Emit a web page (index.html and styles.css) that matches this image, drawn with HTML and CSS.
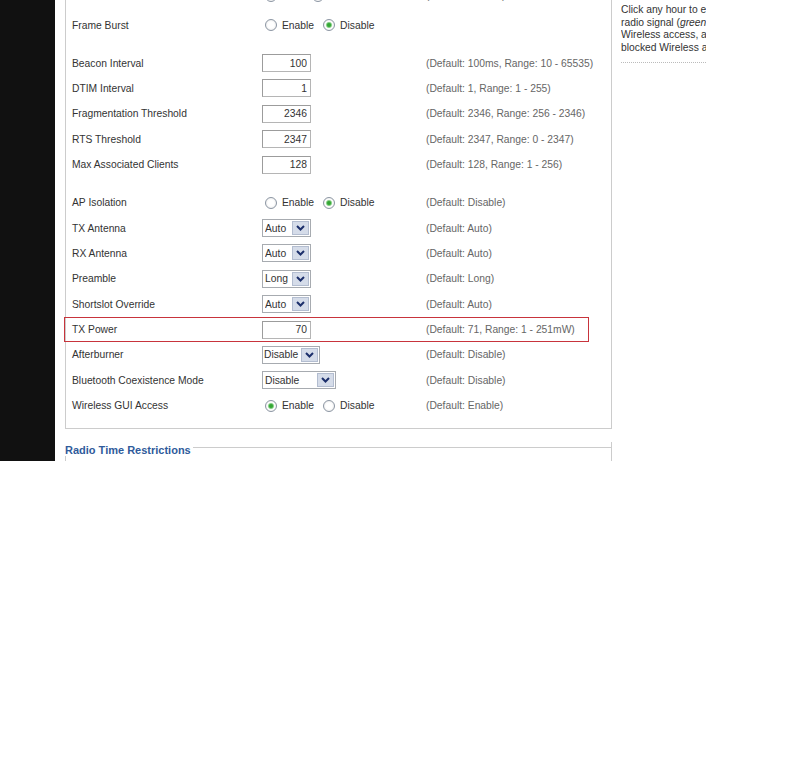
FILE: index.html
```html
<!DOCTYPE html>
<html>
	<head>
		<meta charset="UTF-8" />
		<title>Advanced Settings</title>
		<link rel="stylesheet" href="styles.css">
	</head>
	<body>
<div class="page">
  <div class="sidebar"></div>

  <div class="main">
    <div class="fieldset">
      <div class="row first">
        <div class="label">CTS Protection Mode</div>
        <div class="field">
          <input type="radio" name="cts" /><span class="opt">Auto</span>
          <input type="radio" name="cts" checked /><span class="opt">Disable</span>
        </div>
        <div class="default">(Default: Disable)</div>
      </div>
      <div class="row">
        <div class="label">Frame Burst</div>
        <div class="field">
          <input type="radio" name="burst" /><span class="opt">Enable</span>
          <input type="radio" name="burst" checked /><span class="opt">Disable</span>
        </div>
      </div>

      <div class="spacer"></div>

      <div class="row">
        <div class="label">Beacon Interval</div>
        <div class="field"><input class="num" type="text" value="100" /></div>
        <div class="default">(Default: 100ms, Range: 10 - 65535)</div>
      </div>
      <div class="row">
        <div class="label">DTIM Interval</div>
        <div class="field"><input class="num" type="text" value="1" /></div>
        <div class="default">(Default: 1, Range: 1 - 255)</div>
      </div>
      <div class="row">
        <div class="label">Fragmentation Threshold</div>
        <div class="field"><input class="num" type="text" value="2346" /></div>
        <div class="default">(Default: 2346, Range: 256 - 2346)</div>
      </div>
      <div class="row">
        <div class="label">RTS Threshold</div>
        <div class="field"><input class="num" type="text" value="2347" /></div>
        <div class="default">(Default: 2347, Range: 0 - 2347)</div>
      </div>
      <div class="row">
        <div class="label">Max Associated Clients</div>
        <div class="field"><input class="num" type="text" value="128" /></div>
        <div class="default">(Default: 128, Range: 1 - 256)</div>
      </div>

      <div class="spacer"></div>

      <div class="row">
        <div class="label">AP Isolation</div>
        <div class="field">
          <input type="radio" name="isolation" /><span class="opt">Enable</span>
          <input type="radio" name="isolation" checked /><span class="opt">Disable</span>
        </div>
        <div class="default">(Default: Disable)</div>
      </div>
      <div class="row">
        <div class="label">TX Antenna</div>
        <div class="field">
          <span class="sel"><select><option>Auto</option></select><span class="arrow"><svg width="9" height="6" viewBox="0 0 9 6"><path d="M1 1l3.5 3.5L8 1" fill="none" stroke="#1c2f6b" stroke-width="2"/></svg></span></span>
        </div>
        <div class="default">(Default: Auto)</div>
      </div>
      <div class="row">
        <div class="label">RX Antenna</div>
        <div class="field">
          <span class="sel"><select><option>Auto</option></select><span class="arrow"><svg width="9" height="6" viewBox="0 0 9 6"><path d="M1 1l3.5 3.5L8 1" fill="none" stroke="#1c2f6b" stroke-width="2"/></svg></span></span>
        </div>
        <div class="default">(Default: Auto)</div>
      </div>
      <div class="row">
        <div class="label">Preamble</div>
        <div class="field">
          <span class="sel"><select><option>Long</option></select><span class="arrow"><svg width="9" height="6" viewBox="0 0 9 6"><path d="M1 1l3.5 3.5L8 1" fill="none" stroke="#1c2f6b" stroke-width="2"/></svg></span></span>
        </div>
        <div class="default">(Default: Long)</div>
      </div>
      <div class="row">
        <div class="label">Shortslot Override</div>
        <div class="field">
          <span class="sel"><select><option>Auto</option></select><span class="arrow"><svg width="9" height="6" viewBox="0 0 9 6"><path d="M1 1l3.5 3.5L8 1" fill="none" stroke="#1c2f6b" stroke-width="2"/></svg></span></span>
        </div>
        <div class="default">(Default: Auto)</div>
      </div>
      <div class="row hl">
        <div class="label">TX Power</div>
        <div class="field"><input class="num" type="text" value="70" /></div>
        <div class="default">(Default: 71, Range: 1 - 251mW)</div>
      </div>
      <div class="row">
        <div class="label">Afterburner</div>
        <div class="field">
          <span class="sel"><select class="mid"><option>Disable</option></select><span class="arrow"><svg width="9" height="6" viewBox="0 0 9 6"><path d="M1 1l3.5 3.5L8 1" fill="none" stroke="#1c2f6b" stroke-width="2"/></svg></span></span>
        </div>
        <div class="default">(Default: Disable)</div>
      </div>
      <div class="row">
        <div class="label">Bluetooth Coexistence Mode</div>
        <div class="field">
          <span class="sel"><select class="wide"><option>Disable</option></select><span class="arrow"><svg width="9" height="6" viewBox="0 0 9 6"><path d="M1 1l3.5 3.5L8 1" fill="none" stroke="#1c2f6b" stroke-width="2"/></svg></span></span>
        </div>
        <div class="default">(Default: Disable)</div>
      </div>
      <div class="row">
        <div class="label">Wireless GUI Access</div>
        <div class="field">
          <input type="radio" name="gui" checked /><span class="opt">Enable</span>
          <input type="radio" name="gui" /><span class="opt">Disable</span>
        </div>
        <div class="default">(Default: Enable)</div>
      </div>
    </div>

    <div class="section">
      <div class="legend-row">
        <div class="legend">Radio Time Restrictions</div>
        <div class="rule"></div>
      </div>
      <div class="section-box"></div>
    </div>
  </div>

  <div class="aside">
    <p class="help">Click any hour to enable or disable the<br>radio signal (<em>green</em> indicates allowed<br>Wireless access, and <em>red</em> indicates<br>blocked Wireless access)</p>
  </div>
</div>
	</body>
</html>
```

FILE: styles.css
```css
* {
	margin: 0;
	padding: 0;
	box-sizing: border-box;
}

body {
	background-color: #FFF;
	font-family: "Liberation Sans", Arial, sans-serif;
	font-size: 10.3px;
	color: #333;
}

.page {
	display: flex;
	height: 461px;
	overflow: hidden;
}

.sidebar {
	width: 55px;
	background-color: #111;
	flex-shrink: 0;
}

.main {
	width: 547px;
	margin-left: 10px;
	flex-shrink: 0;
}

.fieldset {
	margin-top: -18px;
	border: 1px solid #CCC;
	padding-bottom: 10px;
}

.row {
	display: flex;
	align-items: center;
	height: 25.4px;
}

.row.first {
	margin-bottom: 4px;
}

.row.hl {
	width: 525px;
	margin-left: -2px;
	padding-left: 2px;
	outline: 1px solid #C8343C;
	outline-offset: -1px;
}

.spacer {
	height: 12.6px;
}

.label {
	width: 196px;
	padding-left: 6px;
	flex-shrink: 0;
}

.field {
	width: 164px;
	display: flex;
	align-items: center;
	flex-shrink: 0;
}

.default {
	color: #666;
}

.opt {
	margin-left: 5px;
	margin-right: 9px;
}

input[type="radio"] {
	appearance: none;
	width: 12px;
	height: 12px;
	margin-left: 3px;
	border: 1px solid #8C96A3;
	border-radius: 50%;
	background: radial-gradient(circle, #FFF 0, #FFF 3px, #E9E9E9 6px);
}

input[type="radio"] + .opt + input[type="radio"] {
	margin-left: 0;
}

input[type="radio"]:checked {
	background: radial-gradient(circle, #2E9E2E 0, #3FAE3F 1.8px, #A8DCA8 2.8px, #FFF 3.6px, #E9E9E9 6px);
}

.num {
	width: 49px;
	height: 18px;
	border: 1px solid #B5B5B5;
	border-top-color: #9C9C9C;
	border-left-color: #9C9C9C;
	text-align: right;
	padding-right: 3px;
	font-family: inherit;
	font-size: 10.3px;
	color: #333;
}

.sel {
	display: inline-flex;
	height: 18px;
	border: 1px solid #A7ABB0;
	background-color: #FFF;
}

.sel select {
	appearance: none;
	border: none;
	background: transparent;
	font-family: inherit;
	font-size: 10.3px;
	color: #333;
	width: 28px;
	padding-left: 2px;
}

.sel select.mid {
	width: 37px;
	padding-left: 1px;
}

.sel select.wide {
	width: 53px;
}

.sel .arrow {
	width: 17px;
	margin: 1px;
	display: flex;
	align-items: center;
	justify-content: center;
	background-color: #D5DCE9;
	border: 1px solid #B3BDD0;
}

.section {
	margin-top: 13px;
	border-right: 1px solid #CCC;
}

.legend-row {
	display: flex;
	height: 16px;
}

.legend {
	font-size: 11px;
	font-weight: bold;
	color: #2F5B9B;
	line-height: 16px;
	padding-right: 2px;
}

.rule {
	flex: 1;
	margin-top: 5px;
	border-top: 1px solid #CCC;
}

.section-box {
	height: 40px;
	margin-top: -2px;
	border-left: 1px solid #CCC;
}

.aside {
	width: 85px;
	margin-left: 9px;
	overflow: hidden;
	flex-shrink: 0;
}

.help {
	white-space: nowrap;
	line-height: 12.5px;
	padding-top: 4px;
	padding-bottom: 8px;
	border-bottom: 1px dotted #BBB;
	color: #333;
}
```
